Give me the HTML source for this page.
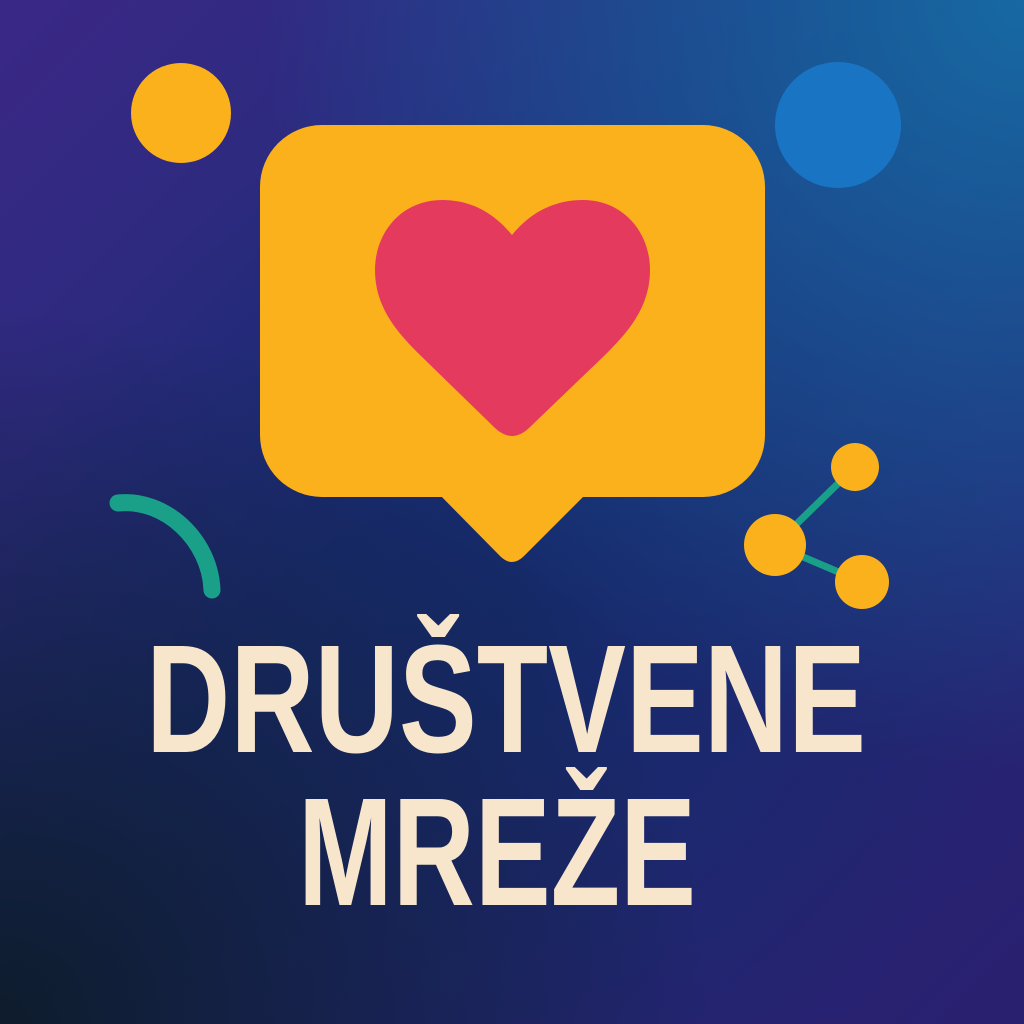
<!DOCTYPE html>
<html><head><meta charset="utf-8"><style>
html,body{margin:0;padding:0;width:1024px;height:1024px;overflow:hidden}
</style></head><body>
<svg width="1024" height="1024" viewBox="0 0 1024 1024" xmlns="http://www.w3.org/2000/svg">
<defs>
<linearGradient id="g1" x1="0" y1="0" x2="1" y2="1">
<stop offset="0" stop-color="#3b2886"/>
<stop offset="0.45" stop-color="#1d2c78"/>
<stop offset="1" stop-color="#2a2070"/>
</linearGradient>
<radialGradient id="g2" cx="1" cy="0" r="0.75">
<stop offset="0" stop-color="#1670a8" stop-opacity="0.9"/>
<stop offset="1" stop-color="#1670a8" stop-opacity="0"/>
</radialGradient>
<radialGradient id="g3" cx="0" cy="1" r="0.7">
<stop offset="0" stop-color="#0e1c2c" stop-opacity="1"/>
<stop offset="1" stop-color="#0e1c2c" stop-opacity="0"/>
</radialGradient>
<radialGradient id="g4" cx="0.5" cy="0.6" r="0.5">
<stop offset="0" stop-color="#142a68" stop-opacity="0.9"/>
<stop offset="1" stop-color="#142a68" stop-opacity="0"/>
</radialGradient>
</defs>
<rect width="1024" height="1024" fill="url(#g1)"/>
<rect width="1024" height="1024" fill="url(#g4)"/>
<rect width="1024" height="1024" fill="url(#g2)"/>
<rect width="1024" height="1024" fill="url(#g3)"/>
<circle cx="181" cy="113" r="50" fill="#fbb11b"/>
<circle cx="838" cy="125" r="63" fill="#1a74c4"/>
<rect x="260" y="125" width="505" height="372" rx="62" fill="#fbb11b"/>
<path d="M435,490 L500,556 Q512,568 524,556 L590,490 Z" fill="#fbb11b"/>
<path d="M512,235 C490,208 465,200 442,200 C402,200 375,232 375,270 C375,308 398,333 420,355 L495,428 Q512,444 529,428 L605,355 C627,333 650,308 650,270 C650,232 623,200 583,200 C560,200 534,208 512,235 Z" fill="#e43a5e"/>
<path d="M118,503 C165,498 210,540 212,590" fill="none" stroke="#1aa088" stroke-width="17" stroke-linecap="round"/>
<line x1="775" y1="545" x2="855" y2="467" stroke="#1aa088" stroke-width="7"/>
<line x1="775" y1="545" x2="862" y2="582" stroke="#1aa088" stroke-width="7"/>
<circle cx="855" cy="467" r="24" fill="#fbb11b"/>
<circle cx="775" cy="545" r="31" fill="#fbb11b"/>
<circle cx="862" cy="582" r="27" fill="#fbb11b"/>
<g font-family="'Liberation Sans Narrow','Liberation Sans',sans-serif" font-weight="bold" font-size="154" fill="#f7e6cc">
<text x="146" y="752" textLength="720" lengthAdjust="spacingAndGlyphs">DRUŠTVENE</text>
<text x="298" y="905" textLength="398" lengthAdjust="spacingAndGlyphs">MREŽE</text>
</g>
</svg>
</body></html>
